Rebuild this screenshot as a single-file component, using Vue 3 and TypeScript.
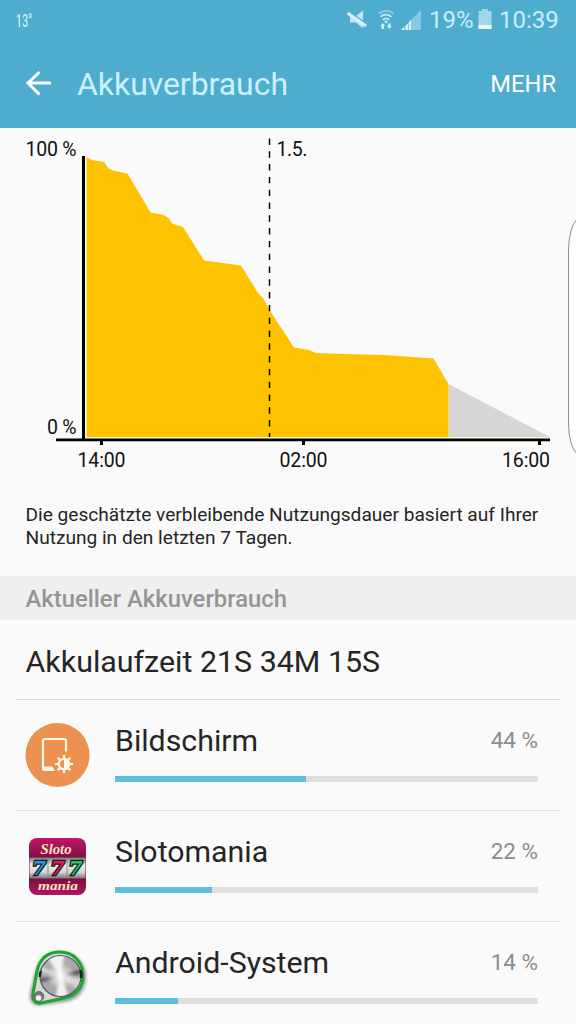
<script setup lang="ts">
interface Consumer {
  id: 'display' | 'slots' | 'system'
  name: string
  percent: number
  bar: number
}

const consumers: Consumer[] = [
  { id: 'display', name: 'Bildschirm', percent: 44, bar: 45.2 },
  { id: 'slots', name: 'Slotomania', percent: 22, bar: 23 },
  { id: 'system', name: 'Android-System', percent: 14, bar: 15 },
]

const level =
  '86.5,438 86.5,157 92,160 104,162 108,168 113,170.500 127.500,173.500 150.500,212.500 164,215 169,218.500 172,223.500 183,227 204,260.500 241,265.500 258,293 263,298 269.500,310 294,347.500 309,350 316,353 345,354 384,355 433.500,358.500 448.500,384 448.500,438'
</script>

<template>
  <div class="screen">
    <header class="header">
      <div class="status">
        <span class="temp">13°</span>
        <svg class="status-icons" width="76" height="24" viewBox="346 7 76 24">
          <g fill="#d2f2fb">
            <path d="M350 15h6l7-5.500v18l-7-6h-6z" opacity=".85" />
            <path d="M348 10l19 13" stroke="#4eadcf" stroke-width="1.500" />
            <path d="M347.500 12l18.500 13" stroke="#d2f2fb" stroke-width="3" />
            <g fill="none" stroke="#c5ebf7" stroke-width="1.700">
              <path d="M378.500 12.500q7.500-5.500 15 0" opacity=".6" />
              <path d="M380.500 15.800q5.500-4.500 11 0" />
              <path d="M382.800 18.800q3.200-2.700 6.400 0" />
            </g>
            <circle cx="386" cy="20.800" r="1.400" />
            <path d="M380.500 25l2.500-3 2 3h-1v3h-2.500v-3zM387 25h1v-2.500h2.500V25h1.300l-2.400 3z" />
            <path d="M401 29l20-20v20z" opacity=".42" />
            <path d="M401 29l3-3v3zM405.500 29v-4l2.500-2.500V29zM409 29v-8l2-2V29z" />
          </g>
        </svg>
        <span class="charge">19%</span>
        <svg class="battery" width="14" height="22" viewBox="0 0 14 22">
          <path d="M4 0h6v2h3.500v18H.5V2H4z" fill="#a1d8e8" />
          <path d="M.5 16h13v4H.5z" fill="#e6fafe" />
        </svg>
        <span class="clock">10:39</span>
      </div>
      <div class="toolbar">
        <svg class="back" width="28" height="28" viewBox="0 0 28 28" fill="none" stroke="#fff" stroke-width="3">
          <path d="M16.500 2L5 13l11.500 11.500M4.500 13h23.500" />
        </svg>
        <h1 class="title">Akkuverbrauch</h1>
        <span class="more">MEHR</span>
      </div>
    </header>

    <svg class="chart" width="576" height="352" viewBox="0 128 576 352">
      <polygon points="448.500,384 549,436.500 549,438 448.500,438" fill="#d6d6d6" />
      <polygon :points="level" fill="#fdc300" />
      <path d="M84 437.500h464" stroke="#fff4d0" stroke-width="1.200" />
      <path d="M83.500 156v283" stroke="#000" stroke-width="3" />
      <path d="M56 439.800h494" stroke="#000" stroke-width="2.800" />
      <path d="M101.500 440v5M303.500 440v5M539.500 440v5" stroke="#000" stroke-width="3" />
      <path d="M269.500 138.500V437" stroke="#000" stroke-width="1.500" stroke-dasharray="6.400 6.400" />
      <g class="labels">
        <text x="25.500" y="156" textLength="51">100 %</text>
        <text x="47" y="434" textLength="29.500">0 %</text>
        <text x="276.500" y="156" textLength="31">1.5.</text>
        <text x="77.500" y="467.400" textLength="48">14:00</text>
        <text x="279.500" y="467.400" textLength="48">02:00</text>
        <text x="502" y="467.400" textLength="48">16:00</text>
      </g>
    </svg>

    <p class="note">Die geschätzte verbleibende Nutzungsdauer basiert auf Ihrer<br />Nutzung in den letzten 7 Tagen.</p>
    <h2 class="section">Aktueller Akkuverbrauch</h2>
    <div class="runtime">Akkulaufzeit 21S 34M 15S</div>

    <ul class="list">
      <li v-for="c in consumers" :key="c.id" class="row">
        <svg v-if="c.id === 'display'" class="icon" width="66" height="66" viewBox="0 0 66 66">
          <circle cx="32.500" cy="33" r="32" fill="#ec9150" />
          <path d="M41 29.500V19q0-2-2-2H20q-2 0-2 2v27q0 2 2 2h9" fill="none" stroke="#fff8ec" stroke-width="2.200" />
          <path d="M18 44.500h9.500l2.500 4.500H20q-2 0-2-2z" fill="#fff8ec" />
          <g stroke="#fff8ec" stroke-width="2.200">
            <path d="M39 33v18M30 42h18M32.800 35.800l12.400 12.400M45.200 35.800L32.800 48.200" />
            <circle cx="39" cy="42" r="5.200" fill="#ec9150" />
          </g>
          <path d="M39 37a5 5 0 0 1 0 10z" fill="#fff8ec" />
        </svg>
        <svg v-else-if="c.id === 'slots'" class="icon" width="66" height="66" viewBox="0 0 66 66">
          <defs>
            <linearGradient id="wine" x2="0" y2="1">
              <stop offset="0" stop-color="#c3156b" />
              <stop offset=".35" stop-color="#800d46" />
              <stop offset=".7" stop-color="#7c0b3e" />
              <stop offset="1" stop-color="#b01466" />
            </linearGradient>
            <linearGradient id="reel" x2="0" y2="1">
              <stop offset="0" stop-color="#777" />
              <stop offset=".35" stop-color="#eee" />
              <stop offset=".7" stop-color="#d5d5d5" />
              <stop offset="1" stop-color="#777" />
            </linearGradient>
          </defs>
          <rect x="4" y="5" width="57" height="57" rx="8" fill="url(#wine)" />
          <rect x="4.500" y="24.500" width="56" height="21" fill="url(#reel)" />
          <path d="M23 25v20M42 25v20" stroke="#888" />
          <text class="script tall" x="15.500" y="21" textLength="31" lengthAdjust="spacingAndGlyphs">Sloto</text>
          <g class="sevens">
            <text x="7" y="42" textLength="14" lengthAdjust="spacingAndGlyphs" fill="#1ba0df">7</text>
            <text x="25.500" y="42" textLength="14" lengthAdjust="spacingAndGlyphs" fill="#e51b58">7</text>
            <text x="43.500" y="42" textLength="14" lengthAdjust="spacingAndGlyphs" fill="#16cf60">7</text>
          </g>
          <text class="script" x="13" y="57" textLength="40" lengthAdjust="spacingAndGlyphs">mania</text>
        </svg>
        <svg v-else class="icon" width="66" height="66" viewBox="0 0 66 66">
          <defs>
            <radialGradient id="shine">
              <stop offset="0" stop-color="#fff" />
              <stop offset="1" stop-color="#fff" stop-opacity="0" />
            </radialGradient>
            <filter id="soft" x="-20%" y="-20%" width="140%" height="140%">
              <feGaussianBlur stdDeviation="1.500" />
            </filter>
            <clipPath id="disc"><circle cx="35.500" cy="32" r="20.500" /></clipPath>
          </defs>
          <path d="M11 30C14 16 23 9 35.500 9c14 0 24 10 24 24 0 12-7 21-18 23l-26 4c-8 1-10-5-9-11z" fill="#aaa" stroke="#999" stroke-width="3" filter="url(#soft)" />
          <path d="M12 27C15 14 23 8 35 8c13 0 23 10 23 23.500 0 12-7 19.500-17 22L16 59c-6 1-9-4-8-9z" fill="#d8d8d8" stroke="#1aa829" stroke-width="3" />
          <g clip-path="url(#disc)">
            <rect x="14" y="11" width="43" height="43" fill="#a9a9a9" />
            <g filter="url(#soft)">
              <path d="M35.500 32L19.500 10h20zM35.500 32l10 24h-16z" fill="#f2f2f2" />
              <path d="M35.500 32l24-8v6zM35.500 32l-24 3v5z" fill="#555" />
              <path d="M35.500 32l24 3v16zM35.500 32L11.500 19v8z" fill="#d5d5d5" />
            </g>
            <circle cx="35.500" cy="32" r="14" fill="url(#shine)" />
          </g>
          <circle cx="35.500" cy="32" r="20.500" fill="none" stroke="#5c5664" stroke-width="1.200" />
          <path d="M15 33q-.5-3 1-6M56 34q1-4-.5-8" fill="none" stroke="#221c2b" stroke-width="2.600" />
          <circle cx="13.800" cy="52.500" r="5" fill="#777" stroke="#666" />
          <circle cx="13.500" cy="54" r="2.800" fill="#f4f4f4" />
        </svg>
        <div class="body">
          <div class="line">
            <span class="name">{{ c.name }}</span>
            <span class="percent">{{ c.percent }} %</span>
          </div>
          <div class="track"><div class="fill" :style="{ width: c.bar + '%' }"></div></div>
        </div>
      </li>
    </ul>

    <svg class="edge" width="10" height="240" viewBox="566 216 10 240">
      <path d="M577 219Q569 228 568.500 250V424Q569 446 577 454" fill="#fff" stroke="#8c8c8c" />
    </svg>
  </div>
</template>

<style>
body {
  margin: 0;
  background: #fafafa;
}
</style>

<style scoped>
.screen {
  position: relative;
  width: 576px;
  height: 1024px;
  overflow: hidden;
  background: #fafafa;
  color: #252525;
  font-family: Roboto, sans-serif;
}
.header {
  height: 128px;
  background: #4eadcf;
}
.status {
  display: flex;
  align-items: center;
  height: 40px;
  padding: 0 15px 0 16px;
  color: #c9eff9;
  font-size: 24px;
  white-space: nowrap;
}
.temp {
  flex: 1;
  font-size: 18px;
  font-weight: 500;
  transform: scaleX(.6);
  transform-origin: left;
}
.status-icons {
  flex: none;
  margin-right: 7px;
}
.charge {
  width: 49px;
}
.battery {
  flex: none;
  margin-right: 7px;
}
.clock {
  width: 62px;
}
.toolbar {
  display: flex;
  align-items: center;
  height: 88px;
  padding: 0 20px 0 23px;
}
.back {
  margin-right: 26px;
}
.title {
  flex: 1;
  margin: 0;
  color: #cdf0fa;
  font-size: 31.900px;
  font-weight: 400;
}
.more {
  color: #fff;
  font-size: 23.700px;
}
.chart {
  display: block;
}
.labels {
  font-size: 19.500px;
  fill: #111;
}
.note {
  height: 96px;
  margin: 0;
  padding: 23px 25.500px 0;
  box-sizing: border-box;
  font-size: 19.130px;
  line-height: 23px;
  white-space: nowrap;
}
.section {
  height: 44px;
  margin: 0;
  padding-left: 25.500px;
  background: #efefef;
  color: #959595;
  font-size: 23.850px;
  font-weight: 500;
  line-height: 47px;
}
.runtime {
  height: 79px;
  margin: 0 16px;
  padding-left: 9.500px;
  border-bottom: 1px solid #dadada;
  font-size: 30.400px;
  line-height: 84px;
}
.list {
  margin: 0;
  padding: 0 16px;
  list-style: none;
}
.row {
  display: flex;
  box-sizing: border-box;
  height: 111px;
  padding: 22px 22px 0 9px;
  border-bottom: 1px solid #e4e4e4;
}
.icon {
  flex: none;
  margin-right: 24px;
}
.body {
  flex: 1;
}
.line {
  display: flex;
  align-items: center;
  justify-content: space-between;
  height: 36px;
}
.name {
  font-size: 30.300px;
}
.percent {
  color: #8c8c8c;
  font-size: 22.500px;
}
.track {
  height: 6px;
  margin-top: 18px;
  background: #dfdfdf;
}
.fill {
  height: 100%;
  background: #5bbfdd;
}
.script {
  font: italic bold 13px "Liberation Serif", serif;
  fill: #ffe6bd;
}
.tall {
  font-size: 15px;
}
.sevens {
  font: italic bold 18px "DejaVu Serif", serif;
  stroke: #171720;
  stroke-width: 2.500px;
  paint-order: stroke;
}
.edge {
  position: absolute;
  top: 216px;
  right: 0;
}
</style>
